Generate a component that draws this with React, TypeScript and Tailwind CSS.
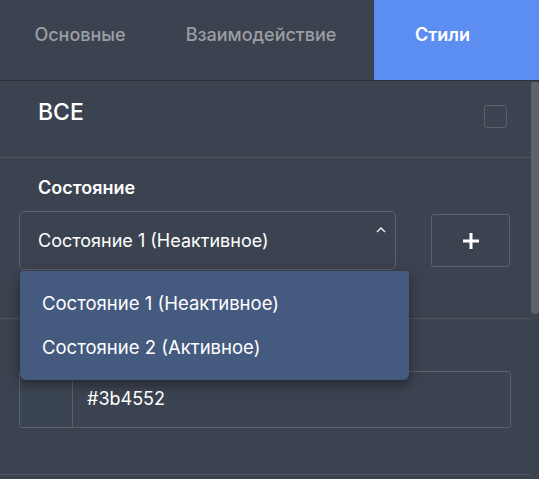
import React from "react";

export default function App() {
  return (
    <div
      className="w-[539px] h-[479px] overflow-hidden bg-[#3c4350] text-white relative"
      style={{ fontFamily: "Inter, Roboto, 'Noto Sans', sans-serif" }}
    >
      {/* Tabs */}
      <div className="flex h-[81px] border-b border-[#2b2f37]">
        <div className="w-[160px] flex justify-center pt-[23px] text-[18px] font-medium leading-[24px] text-[#9b9ea3]">Основные</div>
        <div className="w-[214px] flex justify-center pt-[23px] text-[18px] font-medium leading-[24px] text-[#9b9ea3] pr-[12px]">Взаимодействие</div>
        <div className="flex-1 flex justify-center pt-[23px] pr-[28px] text-[18px] font-semibold leading-[24px] bg-[#5b8ef0] text-white">Стили</div>
      </div>

      <div className="relative flex">
        <div className="w-[531px]">
          {/* ВСЕ row */}
          <div className="h-[77px] flex items-start justify-between pt-[17px] pl-[38px] pr-[24px] border-b border-[#50565f]">
            <span className="text-[23px] leading-[28px] font-medium">ВСЕ</span>
            <span className="mt-[7px] w-[23px] h-[23px] border border-[#5b616c] rounded-[3px]" />
          </div>

          {/* Состояние */}
          <div className="h-[161px] border-b border-[#50565f] pt-[18px]">
            <div className="pl-[38px] text-[18px] font-semibold leading-[24px]">Состояние</div>
            <div className="flex items-center mt-[11px] pl-[19px]">
              <div className="relative w-[377px] h-[59px] border border-[#5b616c] rounded-[5px] flex items-center pl-[18px] text-[18px]">
                Состояние 1 (Неактивное)
                <svg className="absolute right-[9px] top-[14px]" width="10" height="7" viewBox="0 0 10 7">
                  <path d="M1 6 L5 2 L9 6" fill="none" stroke="#e8e9eb" strokeWidth="1.5" />
                </svg>
              </div>
              <div className="ml-[35px] w-[79px] h-[53px] border border-[#5b616c] rounded-[3px] flex items-center justify-center">
                <svg width="18" height="18" viewBox="0 0 18 18">
                  <path d="M9 1 V17 M1 9 H17" stroke="#ffffff" strokeWidth="3" />
                </svg>
              </div>
            </div>
          </div>

          {/* Color */}
          <div className="h-[156px] border-b border-[#50565f] pt-[52px] pl-[19px]">
            <div className="w-[492px] h-[57px] border border-[#5b616c] rounded-[3px] flex">
              <div className="w-[53px] border-r border-[#5b616c] bg-[#3b4552]" />
              <div className="flex items-center pl-[14px] pb-[3px] text-[18px]">#3b4552</div>
            </div>
          </div>
        </div>
        {/* scrollbar */}
        <div className="w-[8px] flex flex-col">
          <div className="h-[232px] mt-[1px] rounded-b-[4px] rounded-t-[2px] bg-[#5d636d]" />
        </div>

        {/* Dropdown menu */}
        <div className="absolute left-[20px] top-[190px] w-[389px] h-[109px] bg-[#455a7f] rounded-b-[6px] rounded-t-[3px] shadow-[0_4px_12px_rgba(0,0,0,0.45)] flex flex-col pt-[11px]">
          <div className="h-[44px] flex items-center pl-[22px] text-[18.5px]">Состояние 1 (Неактивное)</div>
          <div className="h-[44px] flex items-center pl-[22px] text-[18.5px]">Состояние 2 (Активное)</div>
        </div>
      </div>
    </div>
  );
}
